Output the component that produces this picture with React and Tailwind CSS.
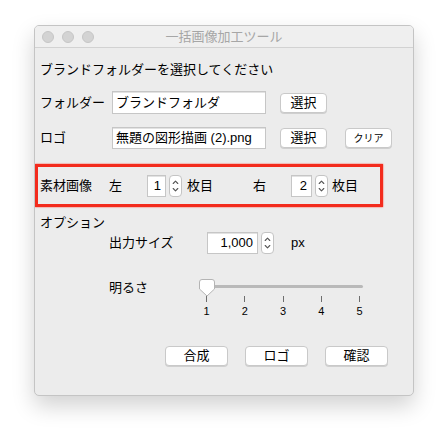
import React from "react";

const font = { fontFamily: '"Liberation Sans", "Noto Sans CJK JP", sans-serif' };

function Field({ w, h = 22, children, right = false }) {
  return (
    <div
      className={`flex items-center bg-white border border-[#c6c6c6] shadow-[inset_0_1px_0_#e2e2e2] text-[13px] text-black ${right ? "justify-end pr-[4px]" : "pl-[3px]"} ${w} ${h === 23 ? "h-[23px]" : "h-[22px]"}`}
    >
      {children}
    </div>
  );
}

function Btn({ w = "w-[47px]", children, small = false }) {
  return (
    <div
      className={`flex items-center justify-center h-[20px] ${w} bg-white border border-[#c9c9c9] rounded-[4px] shadow-[0_1px_0_rgba(0,0,0,0.12)] ${small ? "text-[10px]" : "text-[13px]"} text-black`}
    >
      {children}
    </div>
  );
}

function Stepper() {
  return (
    <div className="flex items-center justify-center w-[13px] h-[22px] bg-white border border-[#c4c4c4] rounded-[4px]">
      <svg width="9" height="16" viewBox="0 0 9 16" fill="none" stroke="#555" strokeWidth="1.1" strokeLinecap="round" strokeLinejoin="round">
        <path d="M2.2 5.5 L4.5 3.2 L6.8 5.5" />
        <path d="M2.2 10.5 L4.5 12.8 L6.8 10.5" />
      </svg>
    </div>
  );
}

export default function App() {
  const ticks = [1, 2, 3, 4, 5];
  return (
    <div className="w-[448px] h-[438px] bg-white pt-[25px] pl-[34px]" style={font}>
      <div className="w-[380px] h-[371px] rounded-[5px] border border-[#c4c4c4] bg-[#ececec] shadow-[0_10px_22px_rgba(0,0,0,0.18)] overflow-hidden">
        {/* title bar */}
        <div className="relative h-[22px] border-b border-[#d2d2d2] bg-[#efefef] flex items-center pl-[7px] gap-[8px]">
          <div className="w-[12px] h-[12px] rounded-full bg-[#d3d3d3] border border-[#c6c6c6]" />
          <div className="w-[12px] h-[12px] rounded-full bg-[#d3d3d3] border border-[#c6c6c6]" />
          <div className="w-[12px] h-[12px] rounded-full bg-[#d3d3d3] border border-[#c6c6c6]" />
          <div className="absolute inset-0 flex items-center justify-center text-[13px] text-[#a6a6a6]">一括画像加工ツール</div>
        </div>

        <div className="pl-[5px] text-[13px] text-black">
          <div className="h-[18px] mt-[13px] flex items-center">ブランドフォルダーを選択してください</div>

          <div className="h-[23px] mt-[12px] flex items-center">
            <div className="w-[72px]">フォルダー</div>
            <Field w="w-[154px]" h={23}>ブランドフォルダ</Field>
            <div className="ml-[14px]"><Btn>選択</Btn></div>
          </div>

          <div className="h-[22px] mt-[13px] flex items-center">
            <div className="w-[72px]">ロゴ</div>
            <Field w="w-[154px]">無題の図形描画 (2).png</Field>
            <div className="ml-[14px]"><Btn>選択</Btn></div>
            <div className="ml-[18px]"><Btn small>クリア</Btn></div>
          </div>

          <div className="-ml-[5px] mt-[15px] w-[348px] h-[43px] border-[3px] border-[#f32b1d] shadow-[0_0_1.5px_#ff3a2a] flex items-center pl-[2px]">
            <div className="w-[69px]">素材画像</div>
            <div className="w-[38px]">左</div>
            <Field w="w-[19px]" right>1</Field>
            <div className="ml-[3px]"><Stepper /></div>
            <div className="ml-[5px] w-[66px]">枚目</div>
            <div className="w-[38px]">右</div>
            <Field w="w-[21px]" right>2</Field>
            <div className="ml-[3px]"><Stepper /></div>
            <div className="ml-[4px]">枚目</div>
          </div>

          <div className="h-[18px] mt-[7px] flex items-center">オプション</div>

          <div className="h-[22px] flex items-center pl-[69px]">
            <div className="w-[98px]">出力サイズ</div>
            <Field w="w-[51px]" right>1,000</Field>
            <div className="ml-[3px]"><Stepper /></div>
            <div className="ml-[17px]">px</div>
          </div>

          <div className="mt-[25px] flex items-start pl-[69px]">
            <div className="w-[91px] h-[18px] flex items-center">明るさ</div>
            <div className="relative w-[170px] h-[42px]">
              <div className="absolute left-[3px] top-[6px] w-[160px] h-[3px] rounded-full bg-[#b9b9b9]" />
              <div className="absolute left-[6px] top-[17px] w-[154px] flex justify-between">
                {ticks.map((t) => (
                  <div key={t} className="w-[1px] h-[6px] bg-[#6e6e6e]" />
                ))}
              </div>
              <div className="absolute left-[0px] top-[25px] w-[166px] flex justify-between text-[11px] leading-[14px] text-black">
                {ticks.map((t) => (
                  <div key={t} className="w-[13px] text-center">{t}</div>
                ))}
              </div>
              <svg className="absolute left-[-1px] top-[0px]" width="16" height="18" viewBox="0 0 16 18">
                <path d="M3 0.5 H13 Q15.5 0.5 15.5 3 V10 L8 17 L0.5 10 V3 Q0.5 0.5 3 0.5 Z" fill="#fff" stroke="#b4b4b4" strokeWidth="1" />
              </svg>
            </div>
          </div>

          <div className="mt-[25px] flex items-center pl-[125px] gap-[17px]">
            <Btn w="w-[63px]">合成</Btn>
            <Btn w="w-[63px]">ロゴ</Btn>
            <Btn w="w-[63px]">確認</Btn>
          </div>
        </div>
      </div>
    </div>
  );
}
